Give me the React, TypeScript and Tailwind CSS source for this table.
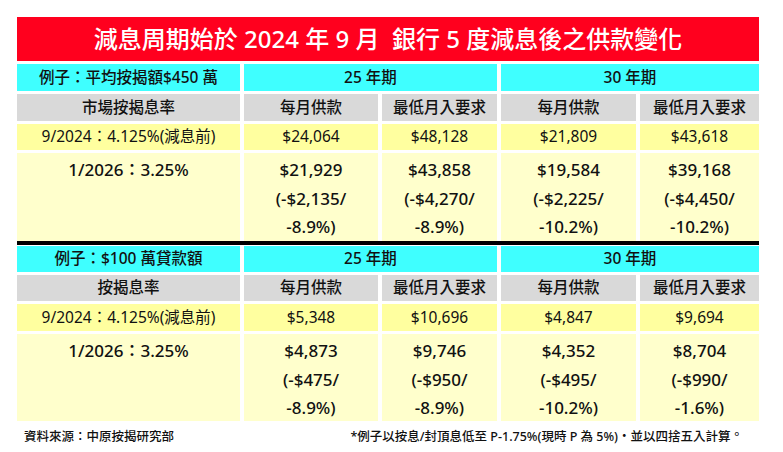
import React from "react";

const FONT = { fontFamily: '"Noto Sans", "Noto Sans CJK TC", sans-serif' };

type Big = string[];

function Section(props: {
  label: string;
  rateLabel: string;
  yellow: string[];
  big: Big[];
  h: [string, string, string, string];
}) {
  const { label, rateLabel, yellow, big, h } = props;
  const cyan = `bg-[#3fffff] ${h[0]} flex items-center justify-center text-[15.5px] font-medium`;
  const gray = `bg-[#d9d9d9] ${h[1]} flex items-center justify-center text-[15.5px] font-medium`;
  const yel = `bg-[#ffff9f] ${h[2]} flex items-center justify-center text-[15.5px]`;
  const light = `bg-[#ffffcc] ${h[3]} flex flex-col items-center pt-[3px] text-[17px] font-medium leading-[28.5px]`;
  return (
    <div className="grid grid-cols-[223px_134px_115px_135px_119px] gap-x-[4px] gap-y-[3px]">
      <div className={cyan}>{label}</div>
      <div className={`${cyan} col-span-2`}>25 年期</div>
      <div className={`${cyan} col-span-2`}>30 年期</div>

      <div className={gray}>{rateLabel}</div>
      <div className={gray}>每月供款</div>
      <div className={gray}>最低月入要求</div>
      <div className={gray}>每月供款</div>
      <div className={gray}>最低月入要求</div>

      <div className={yel}>9/2024：4.125%(減息前)</div>
      {yellow.map((v, i) => (
        <div key={i} className={yel}>
          {v}
        </div>
      ))}

      <div className={light}>
        <div>1/2026：3.25%</div>
      </div>
      {big.map((lines, i) => (
        <div key={i} className={light}>
          {lines.map((l, j) => (
            <div key={j}>{l}</div>
          ))}
        </div>
      ))}
    </div>
  );
}

export default function App() {
  return (
    <div lang="zh-TW" className="w-[783px] h-[452px] bg-white text-[#111]" style={FONT}>
      <div className="pt-[17px] pl-[17px] w-[759px]">
        <div className="w-[742px]">
          <div className="bg-[#ff001e] h-[44px] flex items-center justify-center text-white text-[24px] font-medium whitespace-pre">
            減息周期始於 2024 年 9 月  銀行 5 度減息後之供款變化
          </div>
          <div className="mt-[3px]">
            <Section
              label="例子：平均按揭額$450 萬"
              rateLabel="市場按揭息率"
              yellow={["$24,064", "$48,128", "$21,809", "$43,618"]}
              big={[
                ["$21,929", "(-$2,135/", "-8.9%)"],
                ["$43,858", "(-$4,270/", "-8.9%)"],
                ["$19,584", "(-$2,225/", "-10.2%)"],
                ["$39,168", "(-$4,450/", "-10.2%)"],
              ]}
              h={["h-[27px]", "h-[27px]", "h-[26px]", "h-[88px]"]}
            />
          </div>
          <div className="h-[4px] bg-black" />
          <div className="mt-[1px]">
            <Section
              label="例子：$100 萬貸款額"
              rateLabel="按揭息率"
              yellow={["$5,348", "$10,696", "$4,847", "$9,694"]}
              big={[
                ["$4,873", "(-$475/", "-8.9%)"],
                ["$9,746", "(-$950/", "-8.9%)"],
                ["$4,352", "(-$495/", "-10.2%)"],
                ["$8,704", "(-$990/", "-1.6%)"],
              ]}
              h={["h-[26px]", "h-[26px]", "h-[27px]", "h-[87px]"]}
            />
          </div>
          <div className="mt-[8px] h-[16px] flex justify-between pl-[7px] pr-[16px] text-[12.5px] font-medium leading-[16px]">
            <div>資料來源：中原按揭研究部</div>
            <div>
              *例子以按息/封頂息低至 P-1.75%(現時 P 為 5%)・並以四捨五入計算
              <span className="align-[0.2em] leading-[0]">。</span>
            </div>
          </div>
        </div>
      </div>
    </div>
  );
}
